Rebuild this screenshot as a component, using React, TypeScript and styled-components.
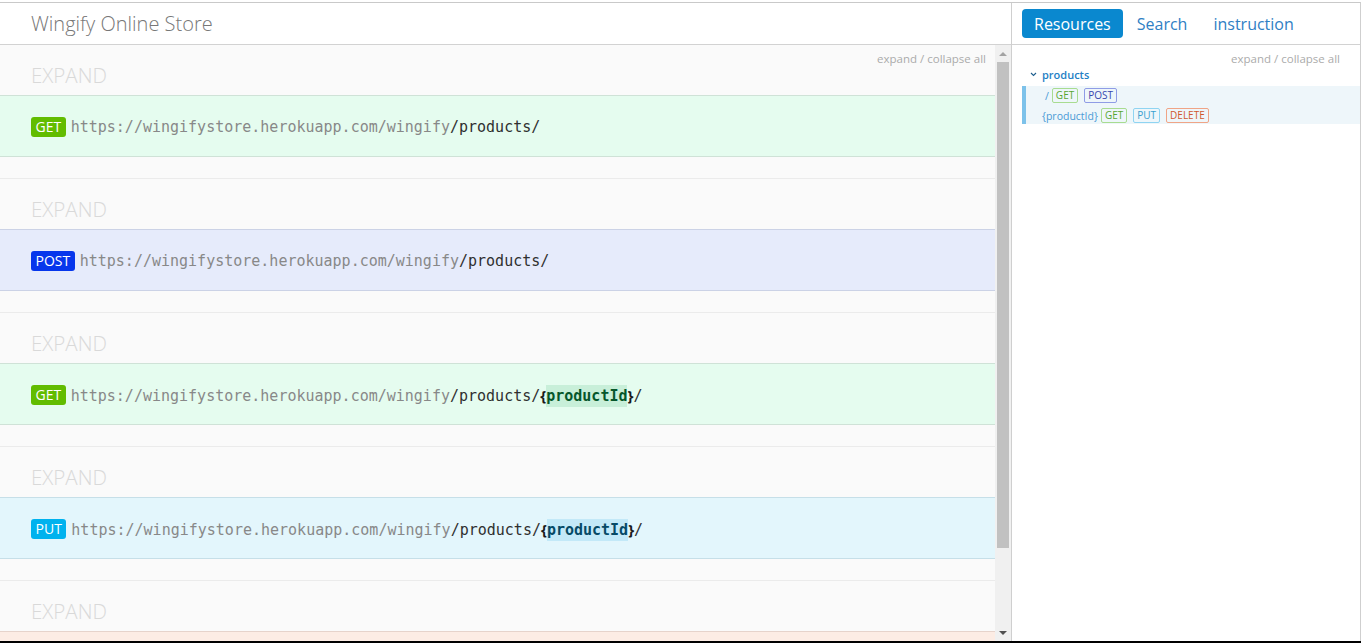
import React from "react";
import styled, { createGlobalStyle } from "styled-components";

type Method = "GET" | "POST" | "PUT" | "DELETE";

const theme: Record<Method, { row: string; border: string; badge: string; hlBg: string; hlFg: string }> = {
  GET: { row: "#e5fcef", border: "#cfe2d7", badge: "#62bc00", hlBg: "#c8efd9", hlFg: "#06572b" },
  POST: { row: "#e6ebfb", border: "#cbd2e6", badge: "#0636ec", hlBg: "#ccd6f6", hlFg: "#0a2a8a" },
  PUT: { row: "#e3f6fc", border: "#c6dfe8", badge: "#00b2ee", hlBg: "#c3e9f8", hlFg: "#064a66" },
  DELETE: { row: "#fcece4", border: "#e6d3cb", badge: "#e0501e", hlBg: "#f7d6c8", hlFg: "#7a2a0a" },
};

const tagTheme: Record<Method, { border: string; fg: string }> = {
  GET: { border: "#a8dc90", fg: "#58a632" },
  POST: { border: "#8f9ce6", fg: "#3848ae" },
  PUT: { border: "#8fd4f2", fg: "#3aa0cf" },
  DELETE: { border: "#f0a486", fg: "#d0582e" },
};

const GlobalStyle = createGlobalStyle`
  html, body {
    margin: 0;
    padding: 0;
    height: 100%;
    overflow: hidden;
    background: #ffffff;
  }
  * { box-sizing: border-box; }
  body {
    font-family: "Open Sans", "Noto Sans", sans-serif;
  }
`;

const Frame = styled.div`
  width: 1361px;
  height: 643px;
  display: flex;
  flex-direction: column;
  padding-top: 2px;
  background: #ffffff;
`;

const Window = styled.div`
  flex: 1;
  min-height: 0;
  display: grid;
  grid-template-columns: 1012px 1fr;
  border-top: 1px solid #c9c9c9;
  border-right: 1px solid #cfcfcf;
`;

const BottomBar = styled.div`
  height: 2px;
  background: #000000;
`;

const LeftPanel = styled.section`
  display: flex;
  flex-direction: column;
  min-height: 0;
  border-right: 1px solid #cfcfcf;
`;

const Header = styled.header`
  height: 42px;
  flex: none;
  display: flex;
  align-items: center;
  border-bottom: 1px solid #d2d2d2;
  background: #ffffff;
`;

const Title = styled.h1`
  margin: 0 0 0 31px;
  font-size: 20px;
  font-weight: 300;
  color: #777777;
`;

const LeftBody = styled.div`
  flex: 1;
  min-height: 0;
  display: flex;
`;

const Viewport = styled.div`
  flex: 1;
  min-width: 0;
  overflow: hidden;
  background: #fafafa;
`;

const ScrollBar = styled.div`
  width: 16px;
  flex: none;
  display: flex;
  flex-direction: column;
  background: #f0f0f0;
`;

const ArrowButton = styled.div<{ $down?: boolean; $disabled?: boolean }>`
  height: 17px;
  flex: none;
  display: flex;
  align-items: center;
  justify-content: center;

  &::before {
    content: "";
    width: 0;
    height: 0;
    border-left: 4px solid transparent;
    border-right: 4px solid transparent;
    ${(p) =>
      p.$down
        ? `border-top: 4px solid ${p.$disabled ? "#a3a3a3" : "#505050"};`
        : `border-bottom: 4px solid ${p.$disabled ? "#a3a3a3" : "#505050"};`}
  }
`;

const Track = styled.div`
  flex: 1;
  min-height: 0;
  padding: 0 2px;
`;

const Thumb = styled.div`
  height: 486px;
  background: #c1c1c1;
`;

const List = styled.div`
  position: relative;
  padding-bottom: 19px;
`;

const ToggleAll = styled.a<{ $right: number }>`
  position: absolute;
  top: 6px;
  right: ${(p) => p.$right}px;
  font-size: 11.5px;
  color: #ababab;
  cursor: pointer;
  text-decoration: none;
`;

const Section = styled.article`
  padding-bottom: 21px;
  border-bottom: 1px solid #ebebeb;
`;

const ExpandBar = styled.div`
  height: 50px;
  display: flex;
  align-items: center;
  padding: 9px 0 0 31px;
  font-size: 20.5px;
  font-weight: 300;
  color: #d9d9d9;
  text-transform: uppercase;
`;

const MethodRow = styled.div<{ $m: Method }>`
  height: 62px;
  display: flex;
  align-items: center;
  padding: 1px 0 0 31px;
  background: ${(p) => theme[p.$m].row};
  border-top: 1px solid ${(p) => theme[p.$m].border};
  border-bottom: 1px solid ${(p) => theme[p.$m].border};
`;

const Badge = styled.span<{ $m: Method }>`
  display: inline-block;
  height: 20px;
  line-height: 20px;
  padding: 0 4.5px;
  border-radius: 3px;
  font-size: 14px;
  color: #ffffff;
  background: ${(p) => theme[p.$m].badge};
`;

const Url = styled.span`
  margin-left: 5px;
  font-family: "DejaVu Sans Mono", "Liberation Mono", monospace;
  font-size: 15px;
  color: #888888;
  white-space: pre;
`;

const Path = styled.span`
  color: #2f2f2f;
`;

const Brace = styled.span`
  font-family: "Open Sans", sans-serif;
  font-weight: 700;
  color: #1a1a1a;
`;

const Param = styled.span<{ $m: Method }>`
  font-weight: 700;
  padding: 2px 0;
  color: ${(p) => theme[p.$m].hlFg};
  background: ${(p) => theme[p.$m].hlBg};
`;

const RightPanel = styled.aside`
  display: flex;
  flex-direction: column;
  min-height: 0;
  background: #ffffff;
`;

const Tabs = styled.nav`
  height: 42px;
  flex: none;
  display: flex;
  align-items: flex-start;
  gap: 2px;
  padding: 6px 0 0 10px;
  border-bottom: 1px solid #d2d2d2;
`;

const Tab = styled.a<{ $active?: boolean }>`
  height: 29px;
  display: flex;
  align-items: center;
  padding: 0 12px;
  border-radius: 4px;
  font-size: 16px;
  text-decoration: none;
  cursor: pointer;
  color: ${(p) => (p.$active ? "#ffffff" : "#2f80c4")};
  background: ${(p) => (p.$active ? "#0a88cf" : "transparent")};
`;

const Tree = styled.div`
  position: relative;
  padding-top: 21px;
`;

const ResourceName = styled.div`
  display: flex;
  align-items: center;
  height: 16px;
  padding-left: 18px;
  font-size: 11px;
  font-weight: 600;
  color: #1f7fc5;
  gap: 5px;
`;

const Block = styled.div`
  margin: 4px 0 0 10px;
  padding: 0 0 0 16px;
  border-left: 4px solid #7dc2ea;
  background: #eef6fa;
`;

const ResRow = styled.div`
  height: 19px;
  display: flex;
  align-items: center;
  gap: 6px;
  &:last-child {
    padding-top: 2px;
  }
`;

const ResPath = styled.span<{ $indent?: number }>`
  margin-left: ${(p) => p.$indent ?? 0}px;
  margin-right: -3px;
  font-size: 10.5px;
  color: #4a9ad6;
`;

const Tag = styled.span<{ $m: Method }>`
  display: inline-block;
  height: 15px;
  line-height: 13px;
  padding: 0 3px;
  border-radius: 2px;
  font-size: 10px;
  border: 1px solid ${(p) => tagTheme[p.$m].border};
  color: ${(p) => tagTheme[p.$m].fg};
`;

const Chevron = () => (
  <svg width="7" height="5" viewBox="0 0 7 5" aria-hidden="true">
    <polyline points="1,1 3.5,3.5 6,1" fill="none" stroke="#1f5f8f" strokeWidth="1.1" />
  </svg>
);

const BASE = "https://wingifystore.herokuapp.com/wingify";

const endpoints: { m: Method; param: boolean }[] = [
  { m: "GET", param: false },
  { m: "POST", param: false },
  { m: "GET", param: true },
  { m: "PUT", param: true },
  { m: "DELETE", param: true },
];

export default function App() {
  return (
    <>
      <GlobalStyle />
      <Frame>
        <Window>
          <LeftPanel>
            <Header>
              <Title>Wingify Online Store</Title>
            </Header>
            <LeftBody>
              <Viewport>
                <List>
                  <ToggleAll $right={9}>expand / collapse all</ToggleAll>
                  {endpoints.map((e, i) => (
                    <Section key={i}>
                      <ExpandBar>Expand</ExpandBar>
                      <MethodRow $m={e.m}>
                        <Badge $m={e.m}>{e.m}</Badge>
                        <Url>
                          {BASE}
                          <Path>
                            /products/
                            {e.param && (
                              <>
                                <Brace>{"{"}</Brace>
                                <Param $m={e.m}>productId</Param>
                                <Brace>{"}"}</Brace>/
                              </>
                            )}
                          </Path>
                        </Url>
                      </MethodRow>
                    </Section>
                  ))}
                </List>
              </Viewport>
              <ScrollBar aria-hidden="true">
                <ArrowButton $disabled />
                <Track>
                  <Thumb />
                </Track>
                <ArrowButton $down />
              </ScrollBar>
            </LeftBody>
          </LeftPanel>
          <RightPanel>
            <Tabs>
              <Tab $active>Resources</Tab>
              <Tab>Search</Tab>
              <Tab>instruction</Tab>
            </Tabs>
            <Tree>
              <ToggleAll $right={20}>expand / collapse all</ToggleAll>
              <ResourceName>
                <Chevron />
                products
              </ResourceName>
              <Block>
                <ResRow>
                  <ResPath $indent={3}>/</ResPath>
                  <Tag $m="GET">GET</Tag>
                  <Tag $m="POST">POST</Tag>
                </ResRow>
                <ResRow>
                  <ResPath>{"{productId}"}</ResPath>
                  <Tag $m="GET">GET</Tag>
                  <Tag $m="PUT">PUT</Tag>
                  <Tag $m="DELETE">DELETE</Tag>
                </ResRow>
              </Block>
            </Tree>
          </RightPanel>
        </Window>
        <BottomBar />
      </Frame>
    </>
  );
}
